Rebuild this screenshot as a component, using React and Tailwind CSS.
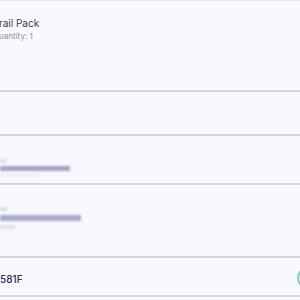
import React from "react";

const Row = ({ className = "", children }) => (
  <div className={`border-b-2 border-[#d6d6de] ${className}`}>{children}</div>
);

export default function App() {
  return (
    <div className="w-[300px] h-[300px] overflow-hidden bg-[#f8f8fe] font-['Inter',sans-serif]">
      <div className="h-[1px] bg-[#e6e6ec]" />
      <Row className="h-[91px] pt-[16px] -ml-[7px]">
        <p className="text-[10px] leading-[12px] text-[#3a3b52]">Trail Pack</p>
        <p className="mt-[1px] text-[8px] leading-[12px] text-[#8a8ca3]">Quantity: 1</p>
      </Row>
      <Row className="h-[44px]" />
      <Row className="h-[49px] pt-[23px]">
        <div className="flex flex-col gap-[3px] blur-[1px]">
          <div className="w-[6px] h-[4px] bg-[#dcdce8]" />
          <div className="w-[70px] h-[5px] bg-[#a3a5c2]" />
          <div className="w-[40px] h-[2px] bg-[#ececf4]" />
        </div>
      </Row>
      <Row className="h-[73px] pt-[22px]">
        <div className="flex flex-col gap-[4px] blur-[1px]">
          <div className="w-[7px] h-[4px] bg-[#dcdce8]" />
          <div className="w-[81px] h-[6px] bg-[#abadc8]" />
          <div className="w-[15px] h-[4px] bg-[#e0e0ea]" />
        </div>
      </Row>
      <Row className="h-[39px] flex items-center justify-between -ml-[20px]">
        <span className="pt-[6px] text-[10px] font-medium text-[#2c2e5c]">#A4581F</span>
        <div className="w-[40px] h-[22px] mt-[2px] -mr-[37px] rounded-full border-2 border-[#7fc4b4]" />
      </Row>
    </div>
  );
}
